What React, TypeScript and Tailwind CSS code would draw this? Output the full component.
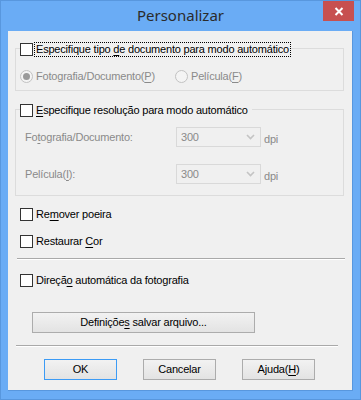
import type { ReactNode } from 'react';

const font = { fontFamily: '"Liberation Sans", Arial, sans-serif' };

const U = ({ children }: { children: ReactNode }) => <span className="underline underline-offset-2">{children}</span>;

const CheckBox = ({ label, focused }: { label: ReactNode; focused?: boolean }) => (
  <div className="flex items-center h-[13px]">
    <span className="w-[13px] h-[13px] border border-[#333] bg-white shrink-0" />
    <span
      className={`ml-[2px] pl-[1px] pr-[1px] leading-[13px] text-black ${focused ? 'outline outline-1 outline-dotted outline-black' : ''}`}
    >
      {label}
    </span>
  </div>
);

const Radio = ({ label, checked }: { label: ReactNode; checked?: boolean }) => (
  <div className="flex items-center text-[#8a8a8a]">
    <span className="w-[13px] h-[13px] rounded-full border border-[#c2c2c2] bg-[#f4f4f4] flex items-center justify-center">
      {checked && <span className="w-[7px] h-[7px] rounded-full bg-[#9a9a9a]" />}
    </span>
    <span className="ml-[3px]">{label}</span>
  </div>
);

const Select = () => (
  <div className="w-[85px] h-[20px] border border-[#d9d9d9] bg-[#f0f0f0] flex items-center justify-between pl-[4px] pr-[5px] text-[#8a8a8a]">
    <span>300</span>
    <svg width="9" height="6" viewBox="0 0 9 6">
      <path d="M1 1 L4.5 4.5 L8 1" fill="none" stroke="#c4c4c4" strokeWidth="1.6" />
    </svg>
  </div>
);

const Button = ({ children, def, className }: { children: ReactNode; def?: boolean; className?: string }) => (
  <div
    className={`h-[21px] flex items-center justify-center border bg-gradient-to-b from-[#f2f2f2] to-[#e3e3e3] text-black ${def ? 'border-[#3c9bf5]' : 'border-[#acacac]'} ${className ?? ''}`}
  >
    <span>{children}</span>
  </div>
);

export default function App() {
  return (
    <div className="w-[361px] h-[400px] bg-[#6aacf5] border border-[#5897de] relative text-[11px] tracking-[-0.2px]" style={font}>
      {/* title bar */}
      <div className="h-[30px] flex items-center justify-center">
        <span className="text-[15px] text-[#2b2b2b] -mt-[2px] tracking-normal" style={{ fontFamily: '"Noto Sans", "Open Sans", sans-serif' }}>Personalizar</span>
      </div>
      <div className="absolute top-0 right-[6px] w-[31px] h-[20px] bg-[#c75050] flex items-center justify-center">
        <svg width="10" height="9" viewBox="0 0 10 9">
          <path d="M1.5 1 L8.5 8 M8.5 1 L1.5 8" stroke="white" strokeWidth="2" />
        </svg>
      </div>

      {/* client area */}
      <div className="ml-[7px] w-[345px] h-[360px] bg-[#f0f0f0] border border-[#5897de] border-t-0 border-l-0 flex flex-col">
        {/* group 1 */}
        <div className="relative mt-[17px] ml-[7px] w-[329px] h-[43px] border border-[#dcdcdc]">
          <div className="absolute -top-[6px] left-[4px] bg-[#f0f0f0] pr-[1px]">
            <CheckBox focused label={<>Especifique tipo <U>d</U>e documento para modo automático</>} />
          </div>
          <div className="flex items-center mt-[19px] ml-[4px]">
            <div className="w-[155px]"><Radio checked label={<>Fotografia/Documento(<U>P</U>)</>} /></div>
            <Radio label={<>Película(<U>F</U>)</>} />
          </div>
        </div>

        {/* group 2 */}
        <div className="relative mt-[18px] ml-[7px] w-[329px] h-[87px] border border-[#dcdcdc]">
          <div className="absolute -top-[6px] left-[4px] bg-[#f0f0f0] pr-[3px]">
            <CheckBox label={<><U>E</U>specifique resolução para modo automático</>} />
          </div>
          <div className="flex items-center mt-[17px] ml-[9px] text-[#8a8a8a]">
            <span className="w-[151px]">Fo<U>t</U>ografia/Documento:</span>
            <Select />
            <span className="ml-[3px] mt-[4px]">dpi</span>
          </div>
          <div className="flex items-center mt-[16px] ml-[9px] text-[#8a8a8a]">
            <span className="w-[151px]">Película(<U>I</U>):</span>
            <Select />
            <span className="ml-[3px] mt-[4px]">dpi</span>
          </div>
        </div>

        <div className="mt-[12px] ml-[12px]">
          <CheckBox label={<>Re<U>m</U>over poeira</>} />
        </div>
        <div className="mt-[14px] ml-[12px]">
          <CheckBox label={<>Restaurar <U>C</U>or</>} />
        </div>
        <div className="mt-[10px] ml-[9px] w-[328px] h-[2px] border-t border-[#a9a9a9] border-b border-b-white" />
        <div className="mt-[14px] ml-[12px]">
          <CheckBox label={<>Direçã<U>o</U> automática da fotografia</>} />
        </div>

        <Button className="mt-[25px] ml-[24px] w-[223px]">Definiçõe<U>s</U> salvar arquivo...</Button>

        <div className="mt-[12px] ml-[8px] w-[322px] h-[2px] border-t border-[#a9a9a9] border-b border-b-white" />

        <div className="mt-[12px] ml-[36px] flex gap-[26px]">
          <Button def className="w-[73px]">OK</Button>
          <Button className="w-[73px]">Cancelar</Button>
          <Button className="w-[73px]">Ajuda(<U>H</U>)</Button>
        </div>
      </div>
    </div>
  );
}
